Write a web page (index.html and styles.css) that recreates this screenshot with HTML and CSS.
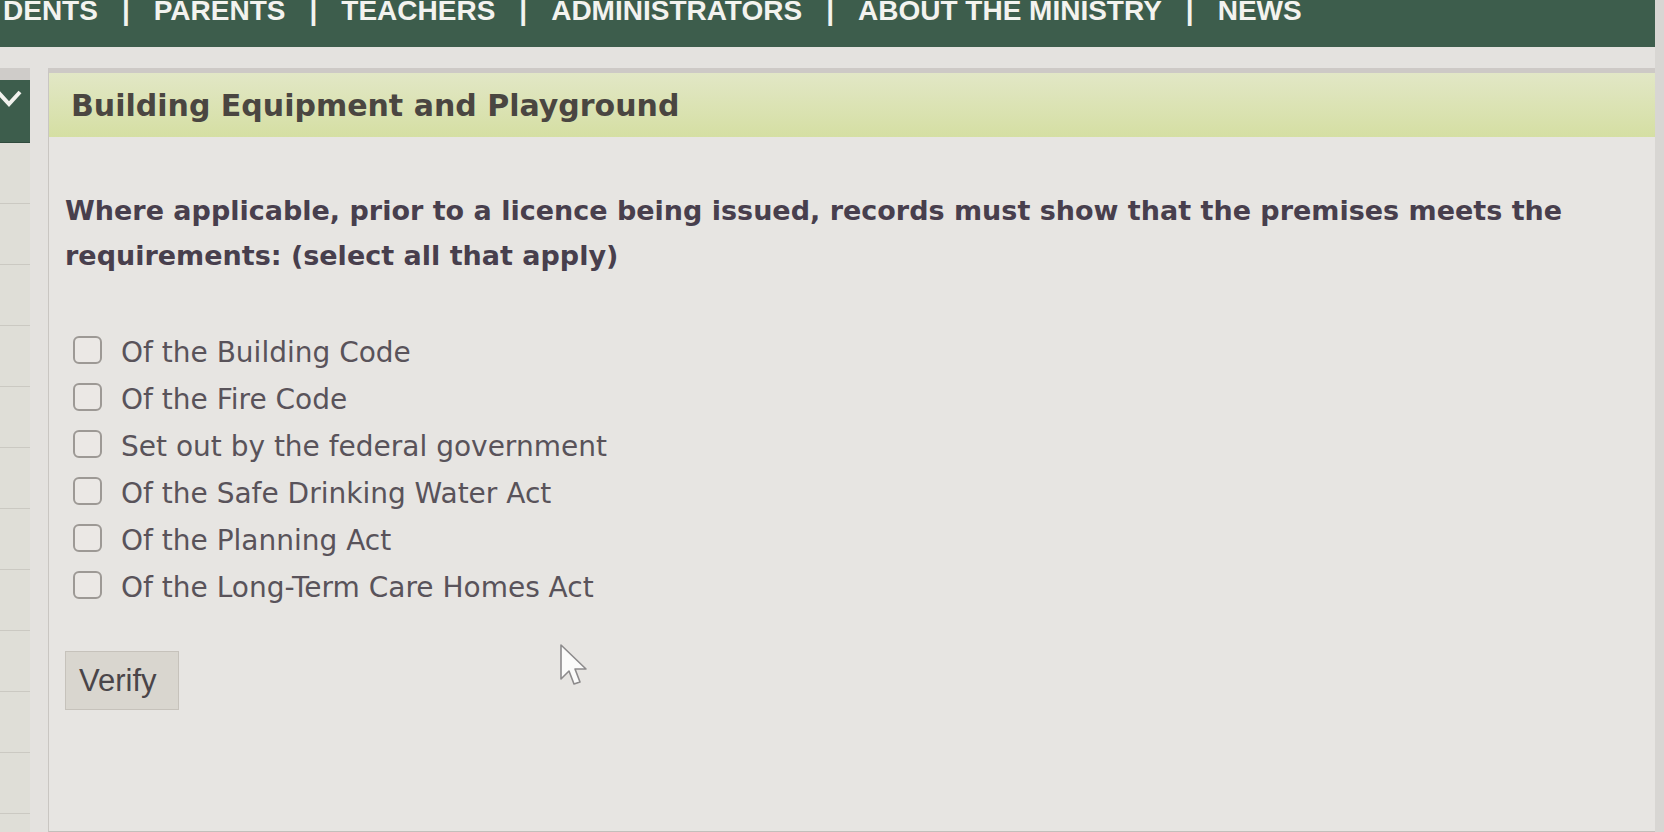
FILE: index.html
```html
<!DOCTYPE html>
<html lang="en">

<head>
  <meta charset="utf-8">
  <title>Building Equipment and Playground</title>
  <link rel="stylesheet" href="styles.css">
</head>

<body>
  <div class="page">
    <!-- Top Navigation Start -->
    <header class="top-nav">
      <ul class="top-nav-list">
        <li>DENTS</li>
        <li>PARENTS</li>
        <li>TEACHERS</li>
        <li>ADMINISTRATORS</li>
        <li>ABOUT THE MINISTRY</li>
        <li>NEWS</li>
      </ul>
    </header>
    <!-- Top Navigation End -->

    <div class="layout">
      <!-- Sidebar -->
      <aside class="sidebar">
        <div class="sidebar-band"></div>
        <div class="sidebar-toggle">
          <svg width="24" height="20" viewBox="0 0 24 20">
            <polyline points="-2,3 9,15 20,3" fill="none" stroke="#f2f2ee" stroke-width="4" />
          </svg>
        </div>
        <div class="sidebar-item"></div>
        <div class="sidebar-item"></div>
        <div class="sidebar-item"></div>
        <div class="sidebar-item"></div>
        <div class="sidebar-item"></div>
        <div class="sidebar-item"></div>
        <div class="sidebar-item"></div>
        <div class="sidebar-item"></div>
        <div class="sidebar-item"></div>
        <div class="sidebar-item"></div>
        <div class="sidebar-item"></div>
      </aside>

      <!-- Main Content Start -->
      <main class="panel">
        <div class="panel-header">
          <h2 class="panel-title">Building Equipment and Playground</h2>
        </div>

        <div class="panel-body">
          <p class="question">Where applicable, prior to a licence being issued, records must show that the premises meets the requirements: (select all that apply)</p>

          <div class="options">
            <label class="option"><input type="checkbox" class="option-check">Of the Building Code</label>
            <label class="option"><input type="checkbox" class="option-check">Of the Fire Code</label>
            <label class="option"><input type="checkbox" class="option-check">Set out by the federal government</label>
            <label class="option"><input type="checkbox" class="option-check">Of the Safe Drinking Water Act</label>
            <label class="option"><input type="checkbox" class="option-check">Of the Planning Act</label>
            <label class="option"><input type="checkbox" class="option-check">Of the Long-Term Care Homes Act</label>
          </div>

          <button class="verify-btn">Verify</button>
        </div>
      </main>
      <!-- Main Content End -->
    </div>

    <!-- Mouse pointer over the page -->
    <svg class="pointer" width="32" height="46" viewBox="0 0 32 46">
      <path d="M2 2 L2 36 L10 28 L15 41 L21 39 L16 26 L27 26 Z" fill="#fbfbfa" stroke="#8d8b8c" stroke-width="1.6" stroke-linejoin="round" />
    </svg>
  </div>
</body>

</html>
```

FILE: styles.css
```css
/* Page background */
body {
  margin: 0;
  background-color: #d8d6d3;
  font-family: "DejaVu Sans", Verdana, sans-serif;
}

.page {
  position: relative;
  width: 1655px;
  height: 832px;
  overflow: hidden;
  background-color: #e4e2df;
}

/* Top navigation */
.top-nav {
  height: 47px;
  background-color: #3d5d4c;
  overflow: hidden;
}

.top-nav-list {
  display: flex;
  list-style: none;
  margin: -4px 0 0;
  padding: 0 0 0 3px;
  font-family: "Liberation Sans", Arial, sans-serif;
  font-size: 28px;
  font-weight: bold;
  line-height: 29px;
  color: #f3f3ef;
}

.top-nav-list li + li::before {
  content: "|";
  margin: 0 24px;
}

/* Sidebar + content */
.layout {
  display: flex;
  gap: 18px;
  padding-top: 21px;
}

.sidebar {
  width: 30px;
  flex-shrink: 0;
  background-color: #dfded7;
}

.sidebar-band {
  height: 12px;
  background-color: #cfccc9;
}

.sidebar-toggle {
  height: 63px;
  padding-top: 9px;
  box-sizing: border-box;
  background-color: #3d5d4c;
  border-bottom: 1px solid #2f4a3c;
}

.sidebar-item {
  height: 60px;
  border-bottom: 1px solid #cbc9c2;
}

/* Main panel */
.panel {
  flex: 1;
  height: 758px;
  border-top: 5px solid #cdc9c6;
  border-left: 1px solid #c9c6c2;
  border-bottom: 1px solid #c2bfbb;
  background-color: #e7e5e2;
}

.panel-header {
  display: flex;
  align-items: center;
  height: 64px;
  padding-left: 22px;
  background: linear-gradient(to bottom, #e2e7c6, #d5dfa3);
}

.panel-title {
  margin: 0;
  font-size: 30px;
  font-weight: bold;
  color: #4a4641;
}

.panel-body {
  padding: 51px 16px 0;
}

/* Question text */
.question {
  margin: 0 0 51px;
  font-size: 27px;
  font-weight: bold;
  line-height: 45px;
  color: #483f4d;
}

/* Checkbox list */
.options {
  display: flex;
  flex-direction: column;
  padding-left: 8px;
}

.option {
  display: flex;
  align-items: center;
  gap: 19px;
  height: 47px;
  font-size: 28px;
  color: #59535a;
}

.option-check {
  appearance: none;
  width: 29px;
  height: 28px;
  margin: 0 0 6px;
  border: 2px solid #9d9995;
  border-radius: 6px;
  background-color: #ebe8e5;
  box-sizing: border-box;
}

/* Verify button */
.verify-btn {
  margin-top: 40px;
  width: 114px;
  height: 59px;
  padding: 0 0 0 13px;
  border: 1px solid #c6c2bb;
  background-color: #d9d6cf;
  font-family: "Liberation Sans", Arial, sans-serif;
  font-size: 31px;
  text-align: left;
  color: #4a4549;
}

/* Mouse pointer */
.pointer {
  position: absolute;
  left: 559px;
  top: 643px;
}
```
